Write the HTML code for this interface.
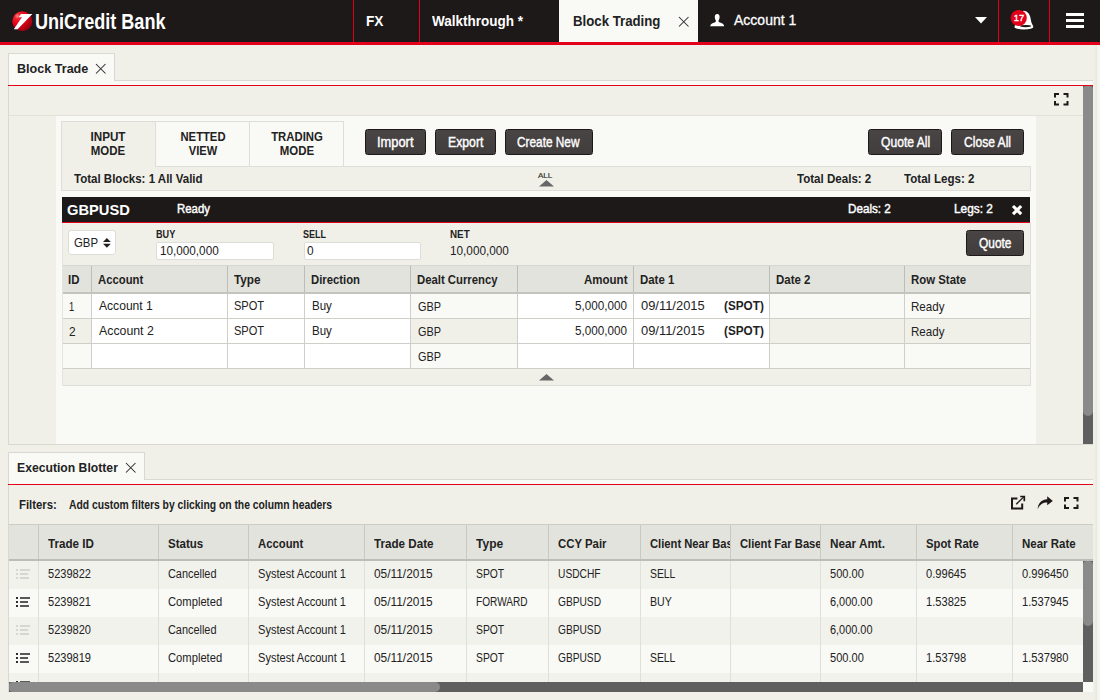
<!DOCTYPE html>
<html lang="en"><head><meta charset="utf-8"><title>Block Trading</title>
<style>
html,body{margin:0;padding:0}
body{width:1100px;height:700px;overflow:hidden;position:relative;background:#f0f0e9;font-family:"Liberation Sans",sans-serif;color:#222}
div{box-sizing:border-box}
.t{position:absolute;white-space:nowrap;line-height:1;display:inline-block}
.btn{position:absolute;background:linear-gradient(#4a4545,#423d3d);border:1px solid #1d1919;border-radius:2.5px}
svg{position:absolute;overflow:visible}
</style></head>
<body>
<div style="position:absolute;left:0px;top:0px;width:1100px;height:42px;background:#1d1919"></div>
<div style="position:absolute;left:0px;top:42px;width:1100px;height:3px;background:#e2001a"></div>
<div style="position:absolute;left:353px;top:0px;width:1px;height:42px;background:#e2001a"></div>
<div style="position:absolute;left:419px;top:0px;width:1px;height:42px;background:#e2001a"></div>
<div style="position:absolute;left:998px;top:0px;width:1px;height:42px;background:#e2001a"></div>
<div style="position:absolute;left:1049px;top:0px;width:1px;height:42px;background:#e2001a"></div>
<div style="position:absolute;left:559px;top:0px;width:139px;height:42px;background:#f9f9f5"></div>
<svg style="left:12px;top:10.6px" width="21" height="21" viewBox="0 0 21 21">
<defs><radialGradient id="lg" cx="26%" cy="24%" r="80%"><stop offset="0" stop-color="#ff8a8a"/><stop offset="0.18" stop-color="#f0202c"/><stop offset="0.55" stop-color="#e2001a"/><stop offset="1" stop-color="#9c0010"/></radialGradient></defs>
<circle cx="10.3" cy="10.3" r="10" fill="url(#lg)"/>
<path d="M8.9 3 L20.4 3.1 L5.6 18.2 L1.8 18.2 L9.9 6.2 L6.7 6.2 Z" fill="#fff"/>
</svg>
<span class="t" style="left:35.00px;top:10.88px;font-size:22px;font-weight:bold;color:#fff;transform:scaleX(0.8212);transform-origin:0 0">UniCredit Bank</span>
<span class="t" style="left:365.50px;top:14.15px;font-size:14px;font-weight:bold;color:#fff;transform:scaleX(0.9726);transform-origin:0 0">FX</span>
<span class="t" style="left:431.90px;top:14.15px;font-size:14px;font-weight:bold;color:#fff;transform:scaleX(0.9642);transform-origin:0 0">Walkthrough *</span>
<span class="t" style="left:572.50px;top:14.15px;font-size:14px;font-weight:bold;color:#222;transform:scaleX(0.9441);transform-origin:0 0">Block Trading</span>
<svg style="left:678.5px;top:17px" width="9.5" height="9.5" viewBox="0 0 9.5 9.5"><path d="M0 0L9.5 9.5M9.5 0L0 9.5" stroke="#2a2a2a" stroke-width="1.05" fill="none"/></svg>
<svg style="left:710.3px;top:13.8px" width="14.4" height="12.2" viewBox="0 0 14.4 12.2"><path d="M7.2 0C8.8 0 9.6 1.2 9.6 3C9.6 4.6 9.1 5.8 8.5 6.5C8.4 7.6 8.7 8 9.8 8.4C12 9.2 14 9.8 14.2 12.2L0.2 12.2C0.4 9.8 2.4 9.2 4.6 8.4C5.7 8 6 7.6 5.9 6.5C5.3 5.8 4.8 4.6 4.8 3C4.8 1.2 5.6 0 7.2 0Z" fill="#fff"/></svg>
<span class="t" style="left:733.50px;top:12.20px;font-size:15px;color:#fff;transform:scaleX(0.9338);transform-origin:0 0;-webkit-text-stroke:0.3px #fff">Account 1</span>
<svg style="left:975px;top:17px" width="12" height="7" viewBox="0 0 12 7"><path d="M0 0H12L6 6.5Z" fill="#fff"/></svg>
<svg style="left:1010px;top:9px" width="24" height="21" viewBox="0 0 24 21">
<path d="M13.4 1.7C18 1.9 20.4 6 20.9 11C21.2 14 22.4 15.6 23.3 17.2L4.4 17.6Z" fill="#fff"/>
<ellipse cx="13.9" cy="17.9" rx="9.5" ry="2.5" fill="#fff"/>
<ellipse cx="15.6" cy="17.1" rx="5.6" ry="1.05" fill="#1d1919"/>
<circle cx="8.75" cy="9" r="8.05" fill="#e2001a"/></svg>
<span class="t" style="left:1019.10px;top:13.16px;font-size:9.5px;color:#fff;transform:translateX(-50%) scaleX(0.9832);-webkit-text-stroke:0.35px #fff">17</span>
<div style="position:absolute;left:1066px;top:13px;width:18px;height:3px;background:#fff"></div>
<div style="position:absolute;left:1066px;top:19px;width:18px;height:3px;background:#fff"></div>
<div style="position:absolute;left:1066px;top:25px;width:18px;height:3px;background:#fff"></div>
<div style="position:absolute;left:1094px;top:45px;width:3px;height:655px;background:linear-gradient(to right,rgba(0,0,0,0),rgba(0,0,0,0.035))"></div>
<div style="position:absolute;left:1097px;top:45px;width:3px;height:655px;background:#f4f4ef"></div>
<div style="position:absolute;left:114px;top:80px;width:979px;height:1px;background:#d9d9d3"></div>
<div style="position:absolute;left:114px;top:81px;width:979px;height:4px;background:#f9f9f5"></div>
<div style="position:absolute;left:8px;top:53px;width:107px;height:28px;background:#f9f9f5;border:1px solid #d9d9d3;border-bottom:none"></div><div style="position:absolute;left:8px;top:81px;width:107px;height:5px;background:#f9f9f5;border-left:1px solid #d9d9d3"></div>
<div style="position:absolute;left:8px;top:85px;width:1085px;height:1px;background:#e2001a"></div>
<span class="t" style="left:16.60px;top:62.09px;font-size:13.6px;font-weight:bold;color:#222;transform:scaleX(0.9252);transform-origin:0 0">Block Trade</span>
<svg style="left:96px;top:64px" width="9.5" height="9.5" viewBox="0 0 9.5 9.5"><path d="M0 0L9.5 9.5M9.5 0L0 9.5" stroke="#2a2a2a" stroke-width="1.05" fill="none"/></svg>
<div style="position:absolute;left:8px;top:86px;width:1085px;height:359px;border-left:1px solid #d9d9d3;border-bottom:1px solid #d9d9d3"></div>
<div style="position:absolute;left:9px;top:115px;width:1074px;height:1px;background:#e2e2dc"></div>
<div style="position:absolute;left:56px;top:116px;width:980px;height:328px;background:#f9f9f5"></div>
<svg style="left:1054px;top:93.4px" width="14.5" height="12.5" viewBox="0 0 14.5 12.5"><path d="M1 4.5 V1 H5 M9.5 1 H13.5 V4.5 M13.5 8 V11.5 H9.5 M5 11.5 H1 V8" stroke="#1d1919" stroke-width="2" fill="none"/></svg>
<div style="position:absolute;left:1083px;top:86px;width:10px;height:358px;background:#5f5f5f"></div>
<div style="position:absolute;left:1083px;top:86px;width:10px;height:330px;background:#8a8a8a;border-radius:3px 3px 5px 5px"></div>
<div style="position:absolute;left:61px;top:121px;width:95px;height:46px;background:#f0f0e9;border:1px solid #deded8;border-bottom:none"></div>
<div style="position:absolute;left:155px;top:121px;width:95px;height:46px;background:#f9f9f5;border:1px solid #deded8"></div>
<div style="position:absolute;left:249px;top:121px;width:95px;height:46px;background:#f9f9f5;border:1px solid #deded8"></div>
<div style="position:absolute;left:61px;top:166px;width:970px;height:25px;background:#f0f0e9;border:1px solid #deded8;border-top:none"></div>
<div style="position:absolute;left:155px;top:166px;width:876px;height:1px;background:#deded8"></div>
<span class="t" style="left:108.40px;top:130.00px;font-size:13px;font-weight:bold;color:#222;transform:translateX(-50%) scaleX(0.8974)">INPUT</span><span class="t" style="left:108.40px;top:144.00px;font-size:13px;font-weight:bold;color:#222;transform:translateX(-50%) scaleX(0.8821)">MODE</span>
<span class="t" style="left:202.60px;top:130.00px;font-size:13px;font-weight:bold;color:#222;transform:translateX(-50%) scaleX(0.8654)">NETTED</span><span class="t" style="left:202.60px;top:144.00px;font-size:13px;font-weight:bold;color:#222;transform:translateX(-50%) scaleX(0.8545)">VIEW</span>
<span class="t" style="left:296.70px;top:130.00px;font-size:13px;font-weight:bold;color:#222;transform:translateX(-50%) scaleX(0.8713)">TRADING</span><span class="t" style="left:296.70px;top:144.00px;font-size:13px;font-weight:bold;color:#222;transform:translateX(-50%) scaleX(0.8821)">MODE</span>
<div class="btn" style="left:365px;top:129px;width:61px;height:26px"></div><span class="t" style="left:377.40px;top:134.85px;font-size:14px;color:#fff;transform:scaleX(0.9197);transform-origin:0 0;-webkit-text-stroke:0.4px #fff">Import</span>
<div class="btn" style="left:435px;top:129px;width:61px;height:26px"></div><span class="t" style="left:448.10px;top:134.85px;font-size:14px;color:#fff;transform:scaleX(0.8747);transform-origin:0 0;-webkit-text-stroke:0.4px #fff">Export</span>
<div class="btn" style="left:505px;top:129px;width:88px;height:26px"></div><span class="t" style="left:517.30px;top:134.85px;font-size:14px;color:#fff;transform:scaleX(0.8455);transform-origin:0 0;-webkit-text-stroke:0.4px #fff">Create New</span>
<div class="btn" style="left:868px;top:129px;width:74px;height:26px"></div><span class="t" style="left:880.50px;top:134.85px;font-size:14px;color:#fff;transform:scaleX(0.8658);transform-origin:0 0;-webkit-text-stroke:0.4px #fff">Quote All</span>
<div class="btn" style="left:951px;top:129px;width:73px;height:26px"></div><span class="t" style="left:964.20px;top:134.85px;font-size:14px;color:#fff;transform:scaleX(0.8629);transform-origin:0 0;-webkit-text-stroke:0.4px #fff">Close All</span>
<span class="t" style="left:73.90px;top:172.00px;font-size:13px;font-weight:bold;color:#222;transform:scaleX(0.8857);transform-origin:0 0">Total Blocks: 1 All Valid</span>
<span class="t" style="left:537.90px;top:171.93px;font-size:8px;color:#333;transform:scaleX(1.0046);transform-origin:0 0;-webkit-text-stroke:0.2px #333">ALL</span>
<svg style="left:538.5px;top:180.3px" width="15" height="6.5" viewBox="0 0 15 6.5"><path d="M0 6.5L7.5 0L15 6.5Z" fill="#666"/></svg>
<span class="t" style="left:797.00px;top:172.00px;font-size:13px;font-weight:bold;color:#222;transform:scaleX(0.8892);transform-origin:0 0">Total Deals: 2</span>
<span class="t" style="left:904.00px;top:172.00px;font-size:13px;font-weight:bold;color:#222;transform:scaleX(0.8899);transform-origin:0 0">Total Legs: 2</span>
<div style="position:absolute;left:62px;top:197px;width:968px;height:25px;background:#1d1919"></div>
<div style="position:absolute;left:62px;top:222px;width:968px;height:1px;background:#e2001a"></div>
<div style="position:absolute;left:62px;top:223px;width:969px;height:163px;background:#f0f0e9;border-bottom:1px solid #deded8"></div>
<span class="t" style="left:66.80px;top:202.30px;font-size:15px;font-weight:bold;color:#fff;transform:scaleX(0.9799);transform-origin:0 0">GBPUSD</span>
<span class="t" style="left:177.20px;top:202.00px;font-size:13px;color:#fff;transform:scaleX(0.8755);transform-origin:0 0;-webkit-text-stroke:0.45px #fff">Ready</span>
<span class="t" style="left:847.50px;top:202.00px;font-size:13px;color:#fff;transform:scaleX(0.8972);transform-origin:0 0;-webkit-text-stroke:0.45px #fff">Deals: 2</span>
<span class="t" style="left:954.20px;top:202.00px;font-size:13px;color:#fff;transform:scaleX(0.9096);transform-origin:0 0;-webkit-text-stroke:0.45px #fff">Legs: 2</span>
<svg style="left:1013px;top:205.5px" width="8.2" height="8.2" viewBox="0 0 8.2 8.2"><path d="M0 0L8.2 8.2M8.2 0L0 8.2" stroke="#fff" stroke-width="3.1" fill="none"/></svg>
<div style="position:absolute;left:68px;top:230px;width:48px;height:25px;background:#fff;border:1px solid #deded8;border-radius:3px"></div>
<span class="t" style="left:73.80px;top:236.00px;font-size:13px;color:#222;transform:scaleX(0.8737);transform-origin:0 0">GBP</span>
<svg style="left:103px;top:237.7px" width="7.8" height="9.8" viewBox="0 0 7.8 9.8"><path d="M0 4L3.9 0L7.8 4ZM0 5.8L3.9 9.8L7.8 5.8Z" fill="#222"/></svg>
<span class="t" style="left:155.90px;top:229.53px;font-size:10px;font-weight:bold;color:#222;transform:scaleX(0.9089);transform-origin:0 0">BUY</span>
<div style="position:absolute;left:156.4px;top:242px;width:117.2px;height:17.5px;background:#fff;border:1px solid #deded8;border-radius:2px"></div>
<span class="t" style="left:160.10px;top:244.00px;font-size:13px;color:#222;transform:scaleX(0.9020);transform-origin:0 0">10,000,000</span>
<span class="t" style="left:303.00px;top:229.53px;font-size:10px;font-weight:bold;color:#222;transform:scaleX(0.8998);transform-origin:0 0">SELL</span>
<div style="position:absolute;left:303.5px;top:242px;width:117.2px;height:17.5px;background:#fff;border:1px solid #deded8;border-radius:2px"></div>
<span class="t" style="left:307.20px;top:244.00px;font-size:13px;color:#222;transform:scaleX(0.9123);transform-origin:0 0">0</span>
<span class="t" style="left:449.80px;top:229.53px;font-size:10px;font-weight:bold;color:#222;transform:scaleX(0.9850);transform-origin:0 0">NET</span>
<span class="t" style="left:450.30px;top:244.00px;font-size:13px;color:#222;transform:scaleX(0.9051);transform-origin:0 0">10,000,000</span>
<div class="btn" style="left:966px;top:230px;width:58px;height:26px"></div><span class="t" style="left:979.00px;top:235.85px;font-size:14px;color:#fff;transform:scaleX(0.8521);transform-origin:0 0;-webkit-text-stroke:0.4px #fff">Quote</span>
<div style="position:absolute;left:62px;top:265px;width:969px;height:29px;background:#e3e3dd;border-top:1px solid #d6d6d0;border-bottom:2px solid #c4c4be"></div>
<div style="position:absolute;left:91px;top:266px;width:1px;height:26px;background:#bdbdb7"></div>
<div style="position:absolute;left:227px;top:266px;width:1px;height:26px;background:#bdbdb7"></div>
<div style="position:absolute;left:304px;top:266px;width:1px;height:26px;background:#bdbdb7"></div>
<div style="position:absolute;left:410px;top:266px;width:1px;height:26px;background:#bdbdb7"></div>
<div style="position:absolute;left:517px;top:266px;width:1px;height:26px;background:#bdbdb7"></div>
<div style="position:absolute;left:633px;top:266px;width:1px;height:26px;background:#bdbdb7"></div>
<div style="position:absolute;left:769px;top:266px;width:1px;height:26px;background:#bdbdb7"></div>
<div style="position:absolute;left:904px;top:266px;width:1px;height:26px;background:#bdbdb7"></div>
<span class="t" style="left:67.90px;top:273.00px;font-size:13px;font-weight:bold;color:#222;transform:scaleX(0.8800);transform-origin:0 0">ID</span>
<span class="t" style="left:98.00px;top:273.00px;font-size:13px;font-weight:bold;color:#222;transform:scaleX(0.8692);transform-origin:0 0">Account</span>
<span class="t" style="left:233.90px;top:273.00px;font-size:13px;font-weight:bold;color:#222;transform:scaleX(0.9051);transform-origin:0 0">Type</span>
<span class="t" style="left:310.80px;top:273.00px;font-size:13px;font-weight:bold;color:#222;transform:scaleX(0.8697);transform-origin:0 0">Direction</span>
<span class="t" style="left:417.20px;top:273.00px;font-size:13px;font-weight:bold;color:#222;transform:scaleX(0.8715);transform-origin:0 0">Dealt Currency</span>
<span class="t" style="left:584.00px;top:273.00px;font-size:13px;font-weight:bold;color:#222;transform:scaleX(0.8858);transform-origin:0 0">Amount</span>
<span class="t" style="left:639.90px;top:273.00px;font-size:13px;font-weight:bold;color:#222;transform:scaleX(0.8788);transform-origin:0 0">Date 1</span>
<span class="t" style="left:775.50px;top:273.00px;font-size:13px;font-weight:bold;color:#222;transform:scaleX(0.8839);transform-origin:0 0">Date 2</span>
<span class="t" style="left:911.00px;top:273.00px;font-size:13px;font-weight:bold;color:#222;transform:scaleX(0.8768);transform-origin:0 0">Row State</span>
<div style="position:absolute;left:62px;top:294px;width:29px;height:24px;background:#f9f9f5"></div>
<div style="position:absolute;left:91px;top:294px;width:136px;height:24px;background:#fff"></div>
<div style="position:absolute;left:227px;top:294px;width:77px;height:24px;background:#fff"></div>
<div style="position:absolute;left:304px;top:294px;width:106px;height:24px;background:#fff"></div>
<div style="position:absolute;left:410px;top:294px;width:107px;height:24px;background:#f9f9f5"></div>
<div style="position:absolute;left:517px;top:294px;width:116px;height:24px;background:#fff"></div>
<div style="position:absolute;left:633px;top:294px;width:136px;height:24px;background:#fff"></div>
<div style="position:absolute;left:769px;top:294px;width:135px;height:24px;background:#f9f9f5"></div>
<div style="position:absolute;left:904px;top:294px;width:127px;height:24px;background:#f9f9f5"></div>
<div style="position:absolute;left:62px;top:318px;width:29px;height:25px;background:#f0f0e9"></div>
<div style="position:absolute;left:91px;top:318px;width:136px;height:25px;background:#fff"></div>
<div style="position:absolute;left:227px;top:318px;width:77px;height:25px;background:#fff"></div>
<div style="position:absolute;left:304px;top:318px;width:106px;height:25px;background:#fff"></div>
<div style="position:absolute;left:410px;top:318px;width:107px;height:25px;background:#f0f0e9"></div>
<div style="position:absolute;left:517px;top:318px;width:116px;height:25px;background:#fff"></div>
<div style="position:absolute;left:633px;top:318px;width:136px;height:25px;background:#fff"></div>
<div style="position:absolute;left:769px;top:318px;width:135px;height:25px;background:#f0f0e9"></div>
<div style="position:absolute;left:904px;top:318px;width:127px;height:25px;background:#f0f0e9"></div>
<div style="position:absolute;left:62px;top:343px;width:29px;height:25px;background:#f9f9f5"></div>
<div style="position:absolute;left:91px;top:343px;width:136px;height:25px;background:#fff"></div>
<div style="position:absolute;left:227px;top:343px;width:77px;height:25px;background:#fff"></div>
<div style="position:absolute;left:304px;top:343px;width:106px;height:25px;background:#fff"></div>
<div style="position:absolute;left:410px;top:343px;width:107px;height:25px;background:#f9f9f5"></div>
<div style="position:absolute;left:517px;top:343px;width:116px;height:25px;background:#fff"></div>
<div style="position:absolute;left:633px;top:343px;width:136px;height:25px;background:#fff"></div>
<div style="position:absolute;left:769px;top:343px;width:135px;height:25px;background:#f9f9f5"></div>
<div style="position:absolute;left:904px;top:343px;width:127px;height:25px;background:#f9f9f5"></div>
<div style="position:absolute;left:91px;top:294px;width:1px;height:75px;background:#cfcfca"></div>
<div style="position:absolute;left:227px;top:294px;width:1px;height:75px;background:#cfcfca"></div>
<div style="position:absolute;left:304px;top:294px;width:1px;height:75px;background:#cfcfca"></div>
<div style="position:absolute;left:410px;top:294px;width:1px;height:75px;background:#cfcfca"></div>
<div style="position:absolute;left:517px;top:294px;width:1px;height:75px;background:#cfcfca"></div>
<div style="position:absolute;left:633px;top:294px;width:1px;height:75px;background:#cfcfca"></div>
<div style="position:absolute;left:769px;top:294px;width:1px;height:75px;background:#cfcfca"></div>
<div style="position:absolute;left:904px;top:294px;width:1px;height:75px;background:#cfcfca"></div>
<div style="position:absolute;left:62px;top:318px;width:969px;height:1px;background:#cfcfca"></div>
<div style="position:absolute;left:62px;top:343px;width:969px;height:1px;background:#cfcfca"></div>
<div style="position:absolute;left:62px;top:368px;width:969px;height:1px;background:#cfcfca"></div>
<span class="t" style="left:68.90px;top:299.60px;font-size:13px;color:#222;transform:scaleX(0.7188);transform-origin:0 0">1</span>
<span class="t" style="left:98.70px;top:298.80px;font-size:13px;color:#222;transform:scaleX(0.9303);transform-origin:0 0">Account 1</span>
<span class="t" style="left:234.40px;top:298.80px;font-size:13px;color:#222;transform:scaleX(0.8501);transform-origin:0 0">SPOT</span>
<span class="t" style="left:312.00px;top:298.80px;font-size:13px;color:#222;transform:scaleX(0.8881);transform-origin:0 0">Buy</span>
<span class="t" style="left:417.50px;top:299.60px;font-size:13px;color:#222;transform:scaleX(0.8373);transform-origin:0 0">GBP</span>
<span class="t" style="left:574.50px;top:298.80px;font-size:13px;color:#222;transform:scaleX(0.8990);transform-origin:0 0">5,000,000</span>
<span class="t" style="left:641.30px;top:298.80px;font-size:13px;color:#222;transform:scaleX(0.9936);transform-origin:0 0">09/11/2015</span>
<span class="t" style="left:723.90px;top:298.80px;font-size:13px;font-weight:bold;color:#222;transform:scaleX(0.9033);transform-origin:0 0">(SPOT)</span>
<span class="t" style="left:911.00px;top:299.60px;font-size:13px;color:#222;transform:scaleX(0.8915);transform-origin:0 0">Ready</span>
<span class="t" style="left:68.90px;top:324.80px;font-size:13px;color:#222;transform:scaleX(0.9123);transform-origin:0 0">2</span>
<span class="t" style="left:98.70px;top:324.00px;font-size:13px;color:#222;transform:scaleX(0.9476);transform-origin:0 0">Account 2</span>
<span class="t" style="left:234.40px;top:324.00px;font-size:13px;color:#222;transform:scaleX(0.8501);transform-origin:0 0">SPOT</span>
<span class="t" style="left:312.00px;top:324.00px;font-size:13px;color:#222;transform:scaleX(0.8881);transform-origin:0 0">Buy</span>
<span class="t" style="left:417.50px;top:324.80px;font-size:13px;color:#222;transform:scaleX(0.8373);transform-origin:0 0">GBP</span>
<span class="t" style="left:574.50px;top:324.00px;font-size:13px;color:#222;transform:scaleX(0.8990);transform-origin:0 0">5,000,000</span>
<span class="t" style="left:641.30px;top:324.00px;font-size:13px;color:#222;transform:scaleX(0.9936);transform-origin:0 0">09/11/2015</span>
<span class="t" style="left:723.90px;top:324.00px;font-size:13px;font-weight:bold;color:#222;transform:scaleX(0.9033);transform-origin:0 0">(SPOT)</span>
<span class="t" style="left:911.00px;top:324.80px;font-size:13px;color:#222;transform:scaleX(0.8915);transform-origin:0 0">Ready</span>
<span class="t" style="left:417.50px;top:350.00px;font-size:13px;color:#222;transform:scaleX(0.8373);transform-origin:0 0">GBP</span>
<svg style="left:538.7px;top:373.8px" width="15" height="6.5" viewBox="0 0 15 6.5"><path d="M0 6.5L7.5 0L15 6.5Z" fill="#666"/></svg>
<div style="position:absolute;left:1030px;top:223px;width:1px;height:163px;background:#deded8"></div>
<div style="position:absolute;left:62px;top:223px;width:1px;height:163px;background:#e4e4de"></div>
<div style="position:absolute;left:144px;top:479px;width:949px;height:1px;background:#d9d9d3"></div>
<div style="position:absolute;left:144px;top:480px;width:949px;height:4px;background:#f9f9f5"></div>
<div style="position:absolute;left:8px;top:452px;width:137px;height:28px;background:#f9f9f5;border:1px solid #d9d9d3;border-bottom:none"></div><div style="position:absolute;left:8px;top:480px;width:137px;height:5px;background:#f9f9f5;border-left:1px solid #d9d9d3"></div>
<div style="position:absolute;left:8px;top:484px;width:1085px;height:1px;background:#e2001a"></div>
<span class="t" style="left:16.60px;top:460.89px;font-size:13.6px;font-weight:bold;color:#222;transform:scaleX(0.8965);transform-origin:0 0">Execution Blotter</span>
<svg style="left:126.3px;top:463px" width="9.5" height="9.5" viewBox="0 0 9.5 9.5"><path d="M0 0L9.5 9.5M9.5 0L0 9.5" stroke="#2a2a2a" stroke-width="1.05" fill="none"/></svg>
<div style="position:absolute;left:8px;top:485px;width:1px;height:207px;background:#d9d9d3"></div>
<span class="t" style="left:18.90px;top:498.84px;font-size:12px;font-weight:bold;color:#222;transform:scaleX(0.9471);transform-origin:0 0">Filters:</span>
<span class="t" style="left:68.50px;top:498.84px;font-size:12px;font-weight:bold;color:#222;transform:scaleX(0.8612);transform-origin:0 0">Add custom filters by clicking on the column headers</span>
<svg style="left:1010px;top:495px" width="16" height="15" viewBox="0 0 16 15"><path d="M7.4 3.4H2V13.5H12.2V8.6" stroke="#1d1919" stroke-width="2" fill="none"/><path d="M6.2 9.3L14 1.6" stroke="#1d1919" stroke-width="1.3" fill="none"/><path d="M10.2 1.5H14.3V6.2" stroke="#1d1919" stroke-width="1.7" fill="none"/></svg>
<svg style="left:1036.5px;top:496px" width="16" height="14" viewBox="0 0 16 14"><path d="M10.2 0.3L15.8 4.9L10.2 9.3V6.5C6 6.5 2.8 8.2 0.7 13.2C0.9 7.4 4.2 3.6 10.2 3.2Z" fill="#1d1919"/></svg>
<svg style="left:1063.7px;top:496.8px" width="14.5" height="12" viewBox="0 0 14.5 12"><path d="M1 4.5 V1 H5 M9.5 1 H13.5 V4.5 M13.5 7.5 V11 H9.5 M5 11 H1 V7.5" stroke="#1d1919" stroke-width="2" fill="none"/></svg>
<div style="position:absolute;left:9px;top:524px;width:1084px;height:37px;background:#e3e3dd;border-top:1px solid #cdcdc8;border-bottom:2px solid #bdbdb8"></div>
<div style="position:absolute;left:38px;top:525px;width:1px;height:34px;background:#c9c9c4"></div>
<div style="position:absolute;left:158px;top:525px;width:1px;height:34px;background:#c9c9c4"></div>
<div style="position:absolute;left:248px;top:525px;width:1px;height:34px;background:#c9c9c4"></div>
<div style="position:absolute;left:364px;top:525px;width:1px;height:34px;background:#c9c9c4"></div>
<div style="position:absolute;left:466px;top:525px;width:1px;height:34px;background:#c9c9c4"></div>
<div style="position:absolute;left:548px;top:525px;width:1px;height:34px;background:#c9c9c4"></div>
<div style="position:absolute;left:640px;top:525px;width:1px;height:34px;background:#c9c9c4"></div>
<div style="position:absolute;left:730px;top:525px;width:1px;height:34px;background:#c9c9c4"></div>
<div style="position:absolute;left:820px;top:525px;width:1px;height:34px;background:#c9c9c4"></div>
<div style="position:absolute;left:916px;top:525px;width:1px;height:34px;background:#c9c9c4"></div>
<div style="position:absolute;left:1012px;top:525px;width:1px;height:34px;background:#c9c9c4"></div>
<span class="t" style="left:48.00px;top:536.80px;font-size:13px;font-weight:bold;color:#222;transform:scaleX(0.8948);transform-origin:0 0">Trade ID</span>
<span class="t" style="left:167.80px;top:536.80px;font-size:13px;font-weight:bold;color:#222;transform:scaleX(0.8884);transform-origin:0 0">Status</span>
<span class="t" style="left:257.80px;top:536.80px;font-size:13px;font-weight:bold;color:#222;transform:scaleX(0.8692);transform-origin:0 0">Account</span>
<span class="t" style="left:373.90px;top:536.80px;font-size:13px;font-weight:bold;color:#222;transform:scaleX(0.8949);transform-origin:0 0">Trade Date</span>
<span class="t" style="left:475.70px;top:536.80px;font-size:13px;font-weight:bold;color:#222;transform:scaleX(0.9255);transform-origin:0 0">Type</span>
<span class="t" style="left:557.50px;top:536.80px;font-size:13px;font-weight:bold;color:#222;transform:scaleX(0.8754);transform-origin:0 0">CCY Pair</span>
<div style="position:absolute;left:640px;top:525px;width:90px;height:34px;overflow:hidden"><span class="t" style="left:9.80px;top:11.80px;font-size:13px;font-weight:bold;color:#222;transform:scaleX(0.8620);transform-origin:0 0">Client Near Base</span></div>
<div style="position:absolute;left:730px;top:525px;width:90px;height:34px;overflow:hidden"><span class="t" style="left:9.90px;top:11.80px;font-size:13px;font-weight:bold;color:#222;transform:scaleX(0.8620);transform-origin:0 0">Client Far Base</span></div>
<span class="t" style="left:830.00px;top:536.80px;font-size:13px;font-weight:bold;color:#222;transform:scaleX(0.9026);transform-origin:0 0">Near Amt.</span>
<span class="t" style="left:925.80px;top:536.80px;font-size:13px;font-weight:bold;color:#222;transform:scaleX(0.8686);transform-origin:0 0">Spot Rate</span>
<span class="t" style="left:1021.80px;top:536.80px;font-size:13px;font-weight:bold;color:#222;transform:scaleX(0.8830);transform-origin:0 0">Near Rate</span>
<div style="position:absolute;left:9px;top:561px;width:1074px;height:28px;background:#f2f2ed"></div>
<div style="position:absolute;left:9px;top:589px;width:1074px;height:28px;background:#f9f9f5"></div>
<div style="position:absolute;left:9px;top:617px;width:1074px;height:28px;background:#f2f2ed"></div>
<div style="position:absolute;left:9px;top:645px;width:1074px;height:28px;background:#f9f9f5"></div>
<div style="position:absolute;left:9px;top:673px;width:1074px;height:9px;background:#f2f2ed"></div>
<div style="position:absolute;left:38px;top:561px;width:1px;height:121px;background:#e0e0da"></div>
<div style="position:absolute;left:158px;top:561px;width:1px;height:121px;background:#e0e0da"></div>
<div style="position:absolute;left:248px;top:561px;width:1px;height:121px;background:#e0e0da"></div>
<div style="position:absolute;left:364px;top:561px;width:1px;height:121px;background:#e0e0da"></div>
<div style="position:absolute;left:466px;top:561px;width:1px;height:121px;background:#e0e0da"></div>
<div style="position:absolute;left:548px;top:561px;width:1px;height:121px;background:#e0e0da"></div>
<div style="position:absolute;left:640px;top:561px;width:1px;height:121px;background:#e0e0da"></div>
<div style="position:absolute;left:730px;top:561px;width:1px;height:121px;background:#e0e0da"></div>
<div style="position:absolute;left:820px;top:561px;width:1px;height:121px;background:#e0e0da"></div>
<div style="position:absolute;left:916px;top:561px;width:1px;height:121px;background:#e0e0da"></div>
<div style="position:absolute;left:1012px;top:561px;width:1px;height:121px;background:#e0e0da"></div>
<svg style="left:16px;top:569px" width="14" height="10" viewBox="0 0 14 10"><rect x="0" y="0" width="2" height="2" fill="#d6d6d2"/><rect x="4" y="0" width="10" height="2" fill="#d6d6d2"/><rect x="0" y="4" width="2" height="2" fill="#d6d6d2"/><rect x="4" y="4" width="8" height="2" fill="#d6d6d2"/><rect x="0" y="8" width="2" height="2" fill="#d6d6d2"/><rect x="4" y="8" width="9" height="2" fill="#d6d6d2"/></svg>
<span class="t" style="left:48.00px;top:568.44px;font-size:12px;color:#222;transform:scaleX(0.9204);transform-origin:0 0">5239822</span>
<span class="t" style="left:167.80px;top:568.44px;font-size:12px;color:#222;transform:scaleX(0.9087);transform-origin:0 0">Cancelled</span>
<span class="t" style="left:257.80px;top:568.44px;font-size:12px;color:#222;transform:scaleX(0.9225);transform-origin:0 0">Systest Account 1</span>
<span class="t" style="left:373.90px;top:568.44px;font-size:12px;color:#222;transform:scaleX(0.9903);transform-origin:0 0">05/11/2015</span>
<span class="t" style="left:475.70px;top:568.44px;font-size:12px;color:#222;transform:scaleX(0.8601);transform-origin:0 0">SPOT</span>
<span class="t" style="left:557.50px;top:568.44px;font-size:12px;color:#222;transform:scaleX(0.8520);transform-origin:0 0">USDCHF</span>
<span class="t" style="left:649.50px;top:568.44px;font-size:12px;color:#222;transform:scaleX(0.8651);transform-origin:0 0">SELL</span>
<span class="t" style="left:830.00px;top:568.44px;font-size:12px;color:#222;transform:scaleX(0.9209);transform-origin:0 0">500.00</span>
<span class="t" style="left:925.80px;top:568.44px;font-size:12px;color:#222;transform:scaleX(0.9265);transform-origin:0 0">0.99645</span>
<span class="t" style="left:1021.80px;top:568.44px;font-size:12px;color:#222;transform:scaleX(0.9288);transform-origin:0 0">0.996450</span>
<svg style="left:16px;top:597px" width="14" height="10" viewBox="0 0 14 10"><rect x="0" y="0" width="2" height="2" fill="#2e2e2e"/><rect x="4" y="0" width="10" height="2" fill="#585856"/><rect x="0" y="4" width="2" height="2" fill="#2e2e2e"/><rect x="4" y="4" width="8" height="2" fill="#585856"/><rect x="0" y="8" width="2" height="2" fill="#2e2e2e"/><rect x="4" y="8" width="9" height="2" fill="#585856"/></svg>
<span class="t" style="left:48.00px;top:596.44px;font-size:12px;color:#222;transform:scaleX(0.9204);transform-origin:0 0">5239821</span>
<span class="t" style="left:167.80px;top:596.44px;font-size:12px;color:#222;transform:scaleX(0.9340);transform-origin:0 0">Completed</span>
<span class="t" style="left:257.80px;top:596.44px;font-size:12px;color:#222;transform:scaleX(0.9225);transform-origin:0 0">Systest Account 1</span>
<span class="t" style="left:373.90px;top:596.44px;font-size:12px;color:#222;transform:scaleX(0.9903);transform-origin:0 0">05/11/2015</span>
<span class="t" style="left:475.70px;top:596.44px;font-size:12px;color:#222;transform:scaleX(0.8412);transform-origin:0 0">FORWARD</span>
<span class="t" style="left:557.50px;top:596.44px;font-size:12px;color:#222;transform:scaleX(0.8483);transform-origin:0 0">GBPUSD</span>
<span class="t" style="left:649.50px;top:596.44px;font-size:12px;color:#222;transform:scaleX(0.8830);transform-origin:0 0">BUY</span>
<span class="t" style="left:830.00px;top:596.44px;font-size:12px;color:#222;transform:scaleX(0.9097);transform-origin:0 0">6,000.00</span>
<span class="t" style="left:925.80px;top:596.44px;font-size:12px;color:#222;transform:scaleX(0.9265);transform-origin:0 0">1.53825</span>
<span class="t" style="left:1021.80px;top:596.44px;font-size:12px;color:#222;transform:scaleX(0.9288);transform-origin:0 0">1.537945</span>
<svg style="left:16px;top:625px" width="14" height="10" viewBox="0 0 14 10"><rect x="0" y="0" width="2" height="2" fill="#d6d6d2"/><rect x="4" y="0" width="10" height="2" fill="#d6d6d2"/><rect x="0" y="4" width="2" height="2" fill="#d6d6d2"/><rect x="4" y="4" width="8" height="2" fill="#d6d6d2"/><rect x="0" y="8" width="2" height="2" fill="#d6d6d2"/><rect x="4" y="8" width="9" height="2" fill="#d6d6d2"/></svg>
<span class="t" style="left:48.00px;top:624.44px;font-size:12px;color:#222;transform:scaleX(0.9204);transform-origin:0 0">5239820</span>
<span class="t" style="left:167.80px;top:624.44px;font-size:12px;color:#222;transform:scaleX(0.9087);transform-origin:0 0">Cancelled</span>
<span class="t" style="left:257.80px;top:624.44px;font-size:12px;color:#222;transform:scaleX(0.9225);transform-origin:0 0">Systest Account 1</span>
<span class="t" style="left:373.90px;top:624.44px;font-size:12px;color:#222;transform:scaleX(0.9903);transform-origin:0 0">05/11/2015</span>
<span class="t" style="left:475.70px;top:624.44px;font-size:12px;color:#222;transform:scaleX(0.8601);transform-origin:0 0">SPOT</span>
<span class="t" style="left:557.50px;top:624.44px;font-size:12px;color:#222;transform:scaleX(0.8483);transform-origin:0 0">GBPUSD</span>
<span class="t" style="left:830.00px;top:624.44px;font-size:12px;color:#222;transform:scaleX(0.9097);transform-origin:0 0">6,000.00</span>
<svg style="left:16px;top:653px" width="14" height="10" viewBox="0 0 14 10"><rect x="0" y="0" width="2" height="2" fill="#2e2e2e"/><rect x="4" y="0" width="10" height="2" fill="#585856"/><rect x="0" y="4" width="2" height="2" fill="#2e2e2e"/><rect x="4" y="4" width="8" height="2" fill="#585856"/><rect x="0" y="8" width="2" height="2" fill="#2e2e2e"/><rect x="4" y="8" width="9" height="2" fill="#585856"/></svg>
<span class="t" style="left:48.00px;top:652.44px;font-size:12px;color:#222;transform:scaleX(0.9204);transform-origin:0 0">5239819</span>
<span class="t" style="left:167.80px;top:652.44px;font-size:12px;color:#222;transform:scaleX(0.9340);transform-origin:0 0">Completed</span>
<span class="t" style="left:257.80px;top:652.44px;font-size:12px;color:#222;transform:scaleX(0.9225);transform-origin:0 0">Systest Account 1</span>
<span class="t" style="left:373.90px;top:652.44px;font-size:12px;color:#222;transform:scaleX(0.9903);transform-origin:0 0">05/11/2015</span>
<span class="t" style="left:475.70px;top:652.44px;font-size:12px;color:#222;transform:scaleX(0.8601);transform-origin:0 0">SPOT</span>
<span class="t" style="left:557.50px;top:652.44px;font-size:12px;color:#222;transform:scaleX(0.8483);transform-origin:0 0">GBPUSD</span>
<span class="t" style="left:649.50px;top:652.44px;font-size:12px;color:#222;transform:scaleX(0.8651);transform-origin:0 0">SELL</span>
<span class="t" style="left:830.00px;top:652.44px;font-size:12px;color:#222;transform:scaleX(0.9209);transform-origin:0 0">500.00</span>
<span class="t" style="left:925.80px;top:652.44px;font-size:12px;color:#222;transform:scaleX(0.9265);transform-origin:0 0">1.53798</span>
<span class="t" style="left:1021.80px;top:652.44px;font-size:12px;color:#222;transform:scaleX(0.9288);transform-origin:0 0">1.537980</span>
<div style="position:absolute;left:9px;top:673px;width:1074px;height:9px;overflow:hidden"><svg style="left:7px;top:8px" width="14" height="10" viewBox="0 0 14 10"><rect x="0" y="0" width="2" height="2" fill="#2e2e2e"/><rect x="4" y="0" width="10" height="2" fill="#585856"/><rect x="0" y="4" width="2" height="2" fill="#2e2e2e"/><rect x="4" y="4" width="8" height="2" fill="#585856"/><rect x="0" y="8" width="2" height="2" fill="#2e2e2e"/><rect x="4" y="8" width="9" height="2" fill="#585856"/></svg></div>
<div style="position:absolute;left:1083px;top:561px;width:10px;height:121px;background:#5f5f5f"></div>
<div style="position:absolute;left:1083px;top:561px;width:10px;height:65px;background:#8a8a8a;border-radius:4px 4px 5px 5px"></div>
<div style="position:absolute;left:9px;top:682px;width:1074px;height:10px;background:#5f5f5f"></div>
<div style="position:absolute;left:9px;top:682px;width:431px;height:10px;background:#8a8a8a;border-radius:4px 5px 5px 4px"></div>
<div style="position:absolute;left:1083px;top:682px;width:10px;height:10px;background:#f9f9f5"></div>
</body></html>
